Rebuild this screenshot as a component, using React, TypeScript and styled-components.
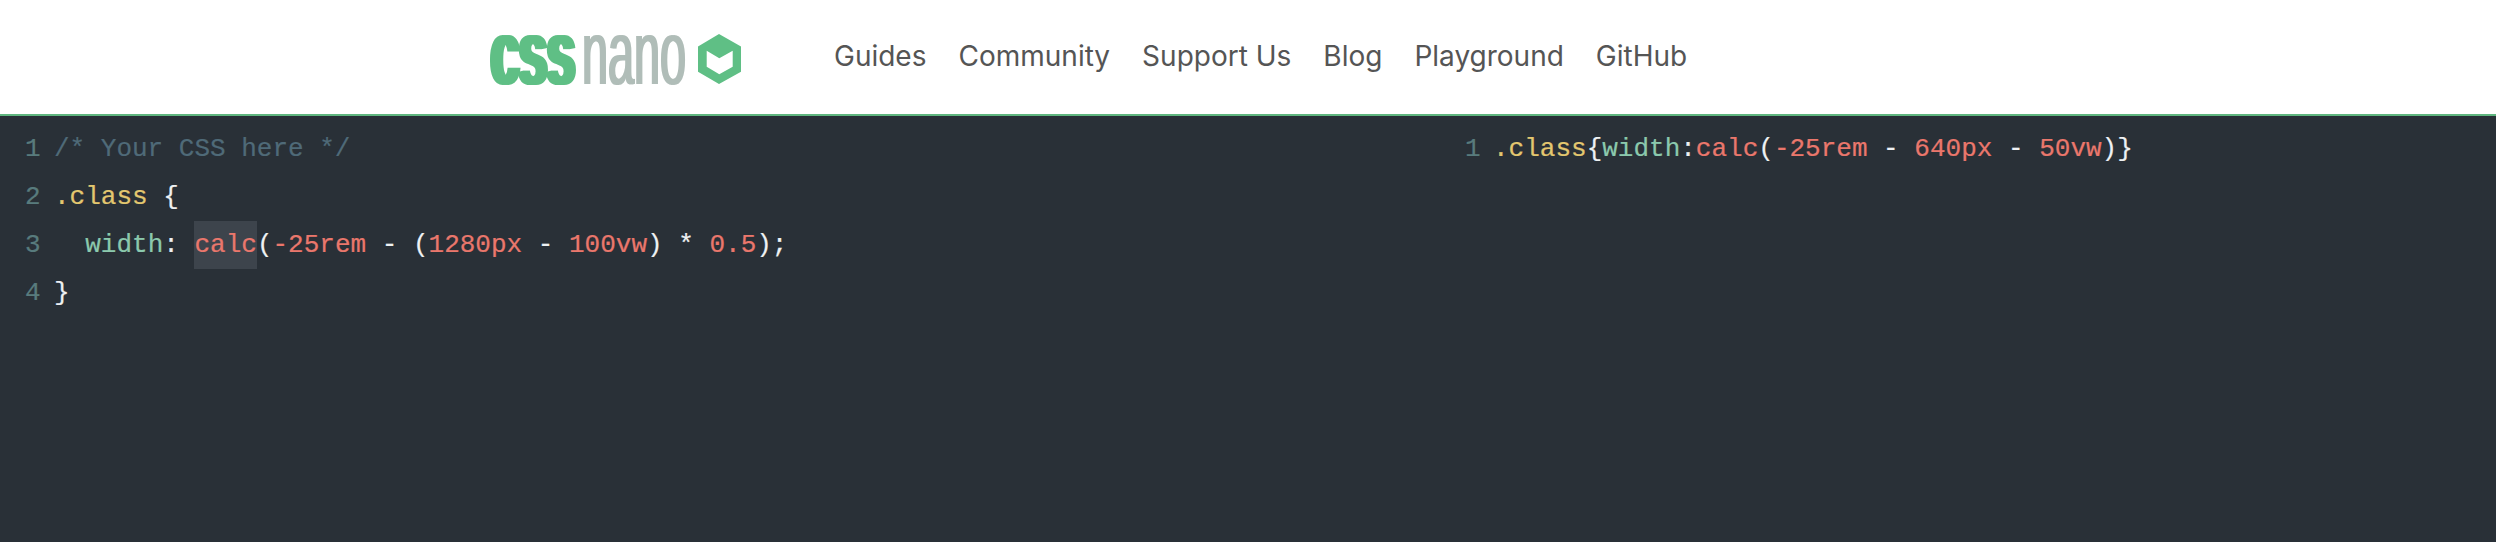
import React from "react";
import styled, { createGlobalStyle } from "styled-components";

const GlobalStyle = createGlobalStyle`
  html, body {
    margin: 0;
    height: 100%;
    background: #293037;
  }
`;

const Page = styled.div`
  height: 542px;
  display: flex;
  flex-direction: column;
  overflow: hidden;
`;

const Header = styled.header`
  height: 114px;
  flex: none;
  display: flex;
  align-items: center;
  padding-left: 488px;
  background: #fff;
  border-bottom: 2px solid #5fb67f;
`;

const LogoMark = styled.svg`
  display: block;
  width: 256px;
  height: 54px;
  flex: none;
  overflow: visible;
`;

const Nav = styled.nav`
  display: flex;
  gap: 32px;
  margin-left: 90px;
  padding-bottom: 3px;
  font-family: Inter, "Liberation Sans", sans-serif;
  font-size: 28px;
  color: #555;
`;

const NavLink = styled.a`
  color: inherit;
  text-decoration: none;
`;

const Panes = styled.main`
  flex: 1;
  display: grid;
  grid-template-columns: 1440px 1fr;
  padding-top: 9px;
  background: #293037;
`;

const Pane = styled.div`
  font-family: "Liberation Mono", monospace;
  font-size: 26px;
  line-height: 48px;
  color: #eef1f3;
  -webkit-text-stroke: 0.2px currentColor;
`;

const Line = styled.div`
  display: flex;
  white-space: pre;
`;

const Gutter = styled.span<{ $width: number }>`
  width: ${(p) => p.$width}px;
  padding-left: 25px;
  box-sizing: border-box;
  flex: none;
  color: #587b7d;
`;

const Code = styled.code`
  font: inherit;
`;

const Tok = styled.span<{ $kind?: "comment" | "selector" | "prop" | "value" }>`
  color: ${(p) =>
    p.$kind === "comment"
      ? "#4f6a78"
      : p.$kind === "selector"
        ? "#e3c76f"
        : p.$kind === "prop"
          ? "#8bc9ad"
          : p.$kind === "value"
            ? "#ea776c"
            : "inherit"};
`;

const Highlight = styled(Tok)`
  background: #3d444c;
  display: inline-block;
`;

const Logo = () => (
  <LogoMark viewBox="0 0 256 54">
    <defs>
      <filter id="thick-css" x="-5%" y="-5%" width="110%" height="110%">
        <feMorphology operator="dilate" radius="3 0" />
      </filter>
      <filter id="thick-nano" x="-5%" y="-5%" width="110%" height="110%">
        <feMorphology operator="dilate" radius="1 0" />
      </filter>
    </defs>
    <g filter="url(#thick-css)">
      <text
        transform="translate(3 53.5) scale(0.56 1)"
        fontFamily="'Liberation Sans', sans-serif"
        fontWeight="700"
        fontSize="90"
        fill="#5fbf85"
      >
        css
      </text>
    </g>
    <g filter="url(#thick-nano)">
      <text
        transform="translate(94 53.5) scale(0.52 1)"
        fontFamily="'Liberation Sans', sans-serif"
        fontSize="90"
        fill="#b0bdb8"
      >
        nano
      </text>
    </g>
    <path
      fillRule="evenodd"
      fill="#5fbf85"
      d="M231 4 L253 16.5 V41.7 L231 54 L210 41.7 V16.5 Z M218.7 20.7 V36.7 L231.3 44.3 L244.7 36.7 V20.7 L231.3 28.3 Z"
    />
  </LogoMark>
);

const links = ["Guides", "Community", "Support Us", "Blog", "Playground", "GitHub"];

export default function App() {
  return (
    <Page>
      <GlobalStyle />
      <Header>
        <Logo />
        <Nav>
          {links.map((link) => (
            <NavLink key={link} href="#">
              {link}
            </NavLink>
          ))}
        </Nav>
      </Header>
      <Panes>
        <Pane>
          <Line>
            <Gutter $width={54}>1</Gutter>
            <Code>
              <Tok $kind="comment">/* Your CSS here */</Tok>
            </Code>
          </Line>
          <Line>
            <Gutter $width={54}>2</Gutter>
            <Code>
              <Tok $kind="selector">.class</Tok> {"{"}
            </Code>
          </Line>
          <Line>
            <Gutter $width={54}>3</Gutter>
            <Code>
              {"  "}
              <Tok $kind="prop">width</Tok>: <Highlight $kind="value">calc</Highlight>(
              <Tok $kind="value">-25rem</Tok> - (<Tok $kind="value">1280px</Tok> -{" "}
              <Tok $kind="value">100vw</Tok>) * <Tok $kind="value">0.5</Tok>);
            </Code>
          </Line>
          <Line>
            <Gutter $width={54}>4</Gutter>
            <Code>{"}"}</Code>
          </Line>
        </Pane>
        <Pane>
          <Line>
            <Gutter $width={53}>1</Gutter>
            <Code>
              <Tok $kind="selector">.class</Tok>
              {"{"}
              <Tok $kind="prop">width</Tok>:<Tok $kind="value">calc</Tok>(
              <Tok $kind="value">-25rem</Tok> - <Tok $kind="value">640px</Tok> -{" "}
              <Tok $kind="value">50vw</Tok>)
              {"}"}
            </Code>
          </Line>
        </Pane>
      </Panes>
    </Page>
  );
}
